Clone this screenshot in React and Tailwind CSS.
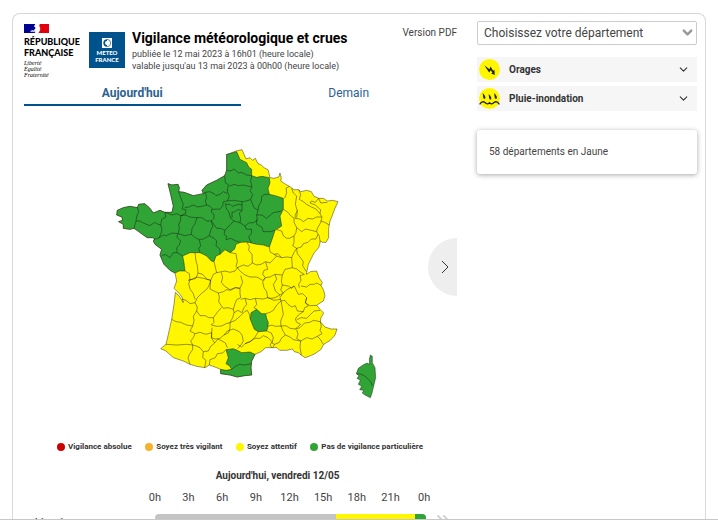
import React, { useState } from 'react';
import { FiChevronDown, FiChevronsRight } from 'react-icons/fi';

const legend = [
  { label: 'Vigilance absolue', dot: 'bg-[#cc0000]' },
  { label: 'Soyez très vigilant', dot: 'bg-[#f5b22d]' },
  { label: 'Soyez attentif', dot: 'bg-[#fff600]' },
  { label: 'Pas de vigilance particulière', dot: 'bg-[#31a436]' },
];

const hours = ['0h', '3h', '6h', '9h', '12h', '15h', '18h', '21h', '0h'];

// Map shapes, as point lists
const france =
  '352,40 378,30 396,26 402,40 408,54 420,50 428,58 436,52 444,68 454,72 462,80 474,86 480,110 492,112 506,108 510,96 514,112 512,120 524,128 538,136 552,146 566,146 572,152 590,148 604,152 612,166 626,172 640,172 652,180 668,178 684,182 674,204 666,226 660,240 656,262 656,290 648,304 638,304 630,300 630,306 626,320 612,336 604,352 595,370 589,400 601,392 620,390 627,410 637,425 633,433 641,448 645,465 640,480 627,488 620,493 630,505 641,516 633,530 631,542 645,558 663,564 681,564 675,582 661,598 641,610 633,625 615,638 597,646 585,650 573,642 565,635 553,632 547,624 530,628 509,628 501,620 485,620 467,620 453,632 435,640 425,660 423,680 425,702 404,704 382,708 360,702 332,698 332,685 320,680 298,672 285,680 260,676 240,670 220,660 190,650 168,630 152,623 168,610 175,580 185,535 192,490 196,454 208,466 220,485 216,468 208,458 192,442 200,420 195,396 180,388 162,370 150,342 155,325 135,310 130,300 134,294 128,290 112,290 100,282 84,270 72,262 60,265 40,262 40,250 26,242 38,238 36,228 20,222 22,208 40,200 60,196 82,200 86,190 104,188 118,200 130,216 150,208 164,214 186,214 190,195 182,160 174,128 186,132 204,130 208,140 206,152 222,154 250,164 280,158 276,148 290,132 320,118 344,104 350,88 350,40';

const greenNorth =
  '352,40 380,32 390,55 410,65 416,78 425,85 425,104 440,109 456,106 478,110 480,125 474,142 478,160 496,164 520,172 520,190 520,205 510,225 515,255 495,268 488,290 478,318 460,312 440,310 424,306 410,303 392,304 378,310 374,324 360,335 345,326 330,340 318,345 312,362 304,360 290,345 270,335 255,335 240,335 218,345 222,365 225,390 208,390 195,396 180,388 162,370 150,342 155,325 135,310 130,300 134,294 128,290 112,290 100,282 84,270 72,262 60,265 40,262 40,250 26,242 38,238 36,228 20,222 22,208 40,200 60,196 82,200 86,190 104,188 118,200 130,216 150,208 164,214 186,214 190,195 182,160 174,128 186,132 204,130 208,140 206,152 222,154 250,164 280,158 276,148 290,132 320,118 344,104 350,88 350,40';

const greenPatches = [
  '440,505 455,518 467,518 470,532 475,545 473,560 470,570 445,572 433,565 426,548 421,535 423,515',
  '348,626 370,623 382,628 395,635 420,633 435,640 425,660 423,680 425,702 404,704 382,708 360,702 332,698 332,685 348,688 365,685 358,674 348,668 355,650',
];

const corsica =
  '781,642 787,646 787,665 795,680 797,710 791,735 785,760 781,770 765,762 757,756 761,748 749,746 755,736 745,730 751,718 741,712 747,704 739,698 745,682 759,672 771,666 779,670 778,655';

const borders = [
  // Bretagne, Normandie
  '82,200 86,212 80,226 78,240 72,262',
  '78,240 90,240 100,246 120,254 134,244 144,250 152,252',
  '164,214 168,228 155,235 152,252 156,266 154,275 148,290 132,296',
  '148,290 160,282 170,284 186,276 204,278',
  '166,214 186,222 200,218 212,224',
  '206,152 212,170 220,190 216,204 228,206 226,218 212,224 212,238 206,250 208,262 204,278',
  '224,200 236,198 250,192 262,198 275,196 290,192',
  '280,158 286,154 290,170 286,180 290,192 300,196 306,202 304,214 312,220 312,232 304,240',
  '286,154 300,152 312,158 318,164 330,160 340,152 352,158',
  '212,224 228,222 238,228 256,230 276,230 290,240 304,240 308,256 302,268 298,284 280,294 268,296',
  '262,228 254,250 246,262 244,280',
  '204,278 225,284 244,280 256,290 268,296 272,315 266,322 270,335',
  '204,278 200,288 212,300 208,312 200,320 202,335 218,345',
  '155,345 165,340 180,350 190,335 202,335',
  '298,284 312,292 320,300 318,314 330,325 330,340',
  '304,240 320,262 332,262 345,268 362,250 372,240',
  '306,206 318,204 330,205 338,194 340,182',
  // Nord, Ile-de-France
  '350,88 362,90 372,84 386,96 395,94 410,102 425,104',
  '344,104 346,125 360,135 372,130 385,134 400,132 425,138',
  '354,134 352,152 358,166 352,180 340,182',
  '352,180 370,178 385,180 400,182 422,176',
  '425,104 422,120 426,138 420,150 428,160 422,176 432,200 444,208 440,222',
  '478,160 464,160 455,166 454,180 446,195 444,208',
  '440,222 456,222 470,232 490,215 515,210',
  '345,186 350,205 356,212 362,232 372,240 390,245 405,255 416,246 430,245 442,238 440,222',
  '348,190 360,190 366,196 385,190 396,192 396,182',
  '396,192 396,210 388,216 392,232 390,245',
  '396,208 384,206 374,212 366,214 366,230',
  '345,268 342,280 350,286 348,296 362,292 378,300 392,304',
  '405,255 408,264 425,265 424,278 416,288 424,306',
  '440,236 440,250 455,258 460,272 480,272 495,268',
  // Est
  '524,172 530,155 528,142 538,136',
  '545,142 550,156 560,165 556,190 562,210 556,220 555,232',
  '520,205 534,214 540,222 552,232 552,244 560,260 558,274 552,285 538,292 530,292 520,284 515,270 500,266',
  '566,146 572,160 568,175 580,182 590,190 604,198 618,204 630,218',
  '562,208 560,230',
  '555,232 570,234 580,242 594,232 608,234 620,228 635,228',
  '560,260 575,272 586,264 604,268 620,272',
  '604,180 616,184 626,172 632,186 652,184',
  '604,180 600,186 616,192 632,206 630,218 636,228 632,245 622,262 620,272 628,286 630,300',
  '632,240 644,244 658,252',
  '552,285 552,305 548,314 560,322 574,318 580,308 594,304 604,294 618,294 624,280',
  '478,318 480,332 492,340 504,338 515,350 532,348 545,350 552,334 560,322',
  '560,322 562,338 570,348 580,362 578,374 589,392',
  // Centre
  '410,303 418,316 416,328 426,340 427,366 440,372 453,370 467,362 480,366 500,345',
  '492,340 500,345 515,350',
  '467,362 473,385 462,388 458,400 466,410 480,408 495,400 517,402 525,385 547,380 545,350',
  '547,380 560,384 570,392 583,400 570,404 573,418 566,430 568,440',
  '517,402 514,420 517,432 535,435 545,442 553,435',
  '360,335 378,338 382,362 378,376 392,392 405,402 420,408 440,408 458,418 466,410',
  '382,380 400,372 414,376 427,366',
  '466,410 458,424 462,440 470,452 473,470 484,472 495,470 510,462',
  '495,400 500,415 490,430 496,450 510,462 520,455',
  '517,432 512,448 520,455 534,444 553,435 560,450 565,460 578,458 590,470 586,484 595,495 584,500 580,512',
  '573,435 590,438 600,430 612,430 620,426 633,433',
  '590,470 586,486 600,494 620,493',
  '520,455 510,470 513,480 524,478 534,490 545,498 556,494 562,510 580,512',
  '392,475 405,472 420,476 436,472 460,474 473,470 492,478 513,475',
  '436,472 440,490 432,500 440,505',
  '467,518 480,514 490,508 500,492 513,480',
  '513,480 516,496 520,520 512,540 513,555 496,556 486,552 473,556',
  '513,555 528,554 540,562 556,564 572,550 560,544 556,534 565,522 580,512',
  '560,536 574,530 590,532 602,520 612,510 630,508',
  '556,564 570,560 584,546 600,544 610,538 631,542',
  '560,566 564,580 560,592 572,600 590,590 606,594 622,586 636,578 630,568 634,555 631,542',
  '513,555 518,568 526,582 540,588 550,596 572,600 570,618 574,642',
  '622,586 630,594 640,610',
  '526,582 514,592 508,604 494,610 488,620',
  '470,570 484,576 490,590 486,606 494,610',
  '405,608 420,602 435,592 450,592 460,584 474,590 486,602 480,612 485,620',
  '382,610 395,618 405,608 420,602 434,590 445,572',
  // Sud-Ouest
  '255,335 258,360 262,374 264,396 258,412 235,418',
  '225,390 238,398 240,418 236,428 240,444 250,458 255,475',
  '235,418 248,414 260,408 280,412 302,418 296,436 290,445 276,456 262,470 255,485 240,488 228,478 216,474',
  '264,396 278,400 290,414 302,418 310,400 320,395 312,362',
  '320,395 345,390 360,394 375,390 384,378',
  '302,418 300,444 312,450 325,456',
  '334,394 338,410 334,424 344,436 360,446 376,440 390,442 398,424 392,404',
  '325,456 340,452 350,446 362,448 376,440 390,442 390,458 392,470 380,476 375,488 370,505 354,500 340,502 334,494 326,482 328,468 325,456',
  '255,485 262,498 260,510 270,524 286,524 296,530 310,530 322,514 334,500',
  '260,510 250,526 252,540 248,555 230,552 212,544 198,542 185,535',
  '310,530 312,544 304,552 320,556 335,555 348,548 360,545 368,530 372,515 370,505',
  '248,555 240,570 255,578 270,574 288,580 305,575 306,560',
  '255,578 250,590 242,600 248,612 230,610 200,612 168,610',
  '248,612 256,614 270,620 280,632 295,630 302,616 314,606 305,592 305,575',
  '305,575 304,590 316,594 330,592 342,582 356,575 360,560 360,545',
  '248,612 248,626 238,640 234,652 240,670',
  '280,632 278,650 288,658 284,680',
  '298,672 300,656 316,650 322,638 338,636 348,626',
  '314,606 324,594 336,600 346,606 352,620',
  '342,582 352,570 370,564 388,572 396,582 400,600 394,610 384,622',
  '360,545 376,538 392,524 404,512 412,508 418,520 421,535',
  '372,515 384,508 396,515 402,500 410,490 405,472',
  '365,685 376,676 388,670 404,672 424,668',
  '739,698 755,700 765,706 775,715 783,724 787,735',
];

function FranceMap() {
  return (
    <svg viewBox="0 0 840 795" className="block w-[280px]" role="img" aria-label="Carte de vigilance">
      <g stroke="#111" strokeOpacity="0.65" strokeWidth="2" strokeLinejoin="round">
        <polygon points={france} fill="#fff600" />
        <polygon points={greenNorth} fill="#31a436" />
        {greenPatches.map(p => <polygon key={p} points={p} fill="#31a436" />)}
        <polygon points={corsica} fill="#31a436" />
        {borders.map(p => <path key={p} d={`M${p}`} fill="none" />)}
      </g>
    </svg>
  );
}

function RepubliqueLogo() {
  return (
    <div className="w-[65px] text-black">
      <svg viewBox="0 0 75 27" className="block h-[9px] w-[25px]">
        <path d="M0 0H34L30 7L35 12L30 18L34 27H0Z" fill="#000091" />
        <path d="M47 0H75V27H43C49 21 51 13 46 7Z" fill="#e1000f" />
        <path d="M18 23C22 15 28 18 34 20V25Z" fill="#b9b9df" />
      </svg>
      <div className="mt-[3px] font-['Lato'] text-[9px] leading-[11px] font-black">RÉPUBLIQUE<br />FRANÇAISE</div>
      <div className="mt-[2px] font-['Liberation_Serif'] text-[6px] leading-[6px] italic">Liberté<br />Égalité<br />Fraternité</div>
    </div>
  );
}

function MeteoLogo() {
  return (
    <div className="mt-2 flex h-9 w-9 flex-col items-center bg-[#00528c] pt-[6px] text-white">
      <svg viewBox="0 0 30 30" className="h-[10px] w-[10px]">
        <rect width="30" height="30" fill="#fff" />
        <path d="M15 4A11 11 0 0 0 15 26Z" fill="#00528c" />
        <path d="M15 9A6 6 0 0 0 15 21Z" fill="#fff" />
        <path d="M15 4A11 11 0 0 1 15 26" fill="none" stroke="#00528c" strokeWidth="2" />
      </svg>
      <div className="mt-[1px] text-center font-['Lato'] text-[6px] leading-[7px] font-black">METEO<br />FRANCE</div>
    </div>
  );
}

function StormIcon() {
  return (
    <svg viewBox="0 0 64 64" className="h-[21px] w-[21px]">
      <circle cx="32" cy="32" r="32" fill="#fff600" />
      <path d="M16 19L32 31L35 23L43 36L47 33L48 49L37 44L41 42L36 34L31 41Z" fill="#222" />
    </svg>
  );
}

function FloodIcon() {
  return (
    <svg viewBox="0 0 64 64" className="h-[21px] w-[21px]">
      <circle cx="32" cy="32" r="32" fill="#fff600" />
      <path d="M11 15C20 22 22 33 17 33C12 33 13 25 11 15ZM29 18C38 25 40 35 35 35C30 35 31 27 29 18ZM46 15C55 22 57 33 52 33C47 33 48 25 46 15Z" fill="#222" />
      <path d="M2 50Q10 38 18 44Q25 52 32 45Q39 52 46 44Q54 38 62 50" fill="none" stroke="#222" strokeWidth="4" />
    </svg>
  );
}

const hazards = [
  { name: 'Orages', icon: <StormIcon /> },
  { name: 'Pluie-inondation', icon: <FloodIcon /> },
];

export default function App() {
  const [tab, setTab] = useState('today');
  const active = 'font-bold border-[#00528c]';

  return (
    <div className="h-screen overflow-hidden border-b border-[#c8c8c8] bg-white px-3 pt-[13px] font-['Roboto',sans-serif] text-[#444]">
      <main className="flex gap-5 rounded-t-lg border border-b-0 border-[#d8d8d8] pr-2 pl-[11px]">
        <section className="min-w-0 flex-1">
          <header className="flex h-14 pt-[10px]">
            <RepubliqueLogo />
            <MeteoLogo />
            <div className="ml-[7px] pt-1">
              <h1 className="text-[14px] leading-5 font-bold text-black">Vigilance météorologique et crues</h1>
              <p className="text-[9px] leading-3">publiée le 12 mai 2023 à 16h01 (heure locale)</p>
              <p className="text-[9px] leading-3">valable jusqu'au 13 mai 2023 à 00h00 (heure locale)</p>
            </div>
            <a href="#pdf" className="ml-auto pt-[1px] text-[10px] leading-4">Version PDF</a>
          </header>

          <div className="mt-3 flex text-[12px] leading-[22px] text-[#2c5f92]">
            <button onClick={() => setTab('today')} className={`flex-1 border-b-2 ${tab === 'today' ? active : 'border-transparent'}`}>Aujourd'hui</button>
            <button onClick={() => setTab('tomorrow')} className={`flex-1 border-b-2 ${tab === 'tomorrow' ? active : 'border-transparent'}`}>Demain</button>
          </div>

          <div className="relative mt-[35px] pl-[86px]">
            <FranceMap />
            <button aria-label="Suivant" className="absolute top-[97px] right-0 flex h-[58px] w-[29px] items-center justify-center rounded-l-full bg-[#eee] pl-1 text-[#333]">
              <svg viewBox="0 0 8 14" className="h-[14px] w-2" fill="none" stroke="currentColor" strokeWidth="1"><path d="M1 1L7 7L1 13" /></svg>
            </button>
          </div>

          <ul className="mt-[35px] flex justify-between pr-[34px] pl-[33px] text-[8px] leading-3 font-bold text-[#333]">
            {legend.map(l => (
              <li key={l.label} className="flex items-center gap-[3px]">
                <span className={`h-[8px] w-[8px] rounded-full ${l.dot}`} />
                {l.label}
              </li>
            ))}
          </ul>

          <h2 className="mt-[15px] pl-[74px] text-center text-[10px] leading-4 font-bold text-[#333]">Aujourd'hui, vendredi 12/05</h2>
          <div className="mt-[6px] grid grid-cols-9 pr-4 pl-[114px] text-center text-[11px] leading-4">
            {hours.map((h, i) => <span key={i}>{h}</span>)}
          </div>
          <div className="mt-2 flex pr-1">
            <div className="w-[131px] pl-[6px] text-[8px] leading-4 font-bold text-[#333]">Phénomènes</div>
            <div className="flex h-[14px] flex-1 overflow-hidden rounded-[4px] bg-[#c4c4c4]">
              <div className="w-2/3" />
              <div className="flex-1 bg-[#fff600]" />
              <div className="w-[11px] bg-[#31a436]" />
            </div>
            <div className="-mt-1 flex w-[27px] pl-[7px] text-[#ccc]">
              <FiChevronsRight size={20} />
            </div>
          </div>
        </section>

        <aside className="w-[220px] pt-[7px]">
          <div className="relative">
            <select aria-label="Département" className="block h-6 w-full appearance-none rounded-[2px] border border-[#ccc] bg-white pl-[6px] text-[12px] text-[#444]">
              <option>Choisissez votre département</option>
            </select>
            <FiChevronDown size={15} strokeWidth={4} className="pointer-events-none absolute top-1 right-[2px] text-[#999]" />
          </div>

          <div className="mt-3 flex flex-col gap-1">
            {hazards.map(h => (
              <button key={h.name} className="flex h-[25px] items-center bg-[#f6f6f6] pr-[7px] pl-[2px] text-[10px] font-bold text-[#333]">
                {h.icon}
                <span className="ml-[9px] flex-1 text-left">{h.name}</span>
                <FiChevronDown size={13} />
              </button>
            ))}
          </div>

          <div className="mt-[19px] rounded-[3px] bg-white px-3 py-[14px] text-[10px] leading-4 shadow-[0_1px_5px_rgba(0,0,0,0.35)]">58 départements en Jaune</div>
        </aside>
      </main>
    </div>
  );
}
